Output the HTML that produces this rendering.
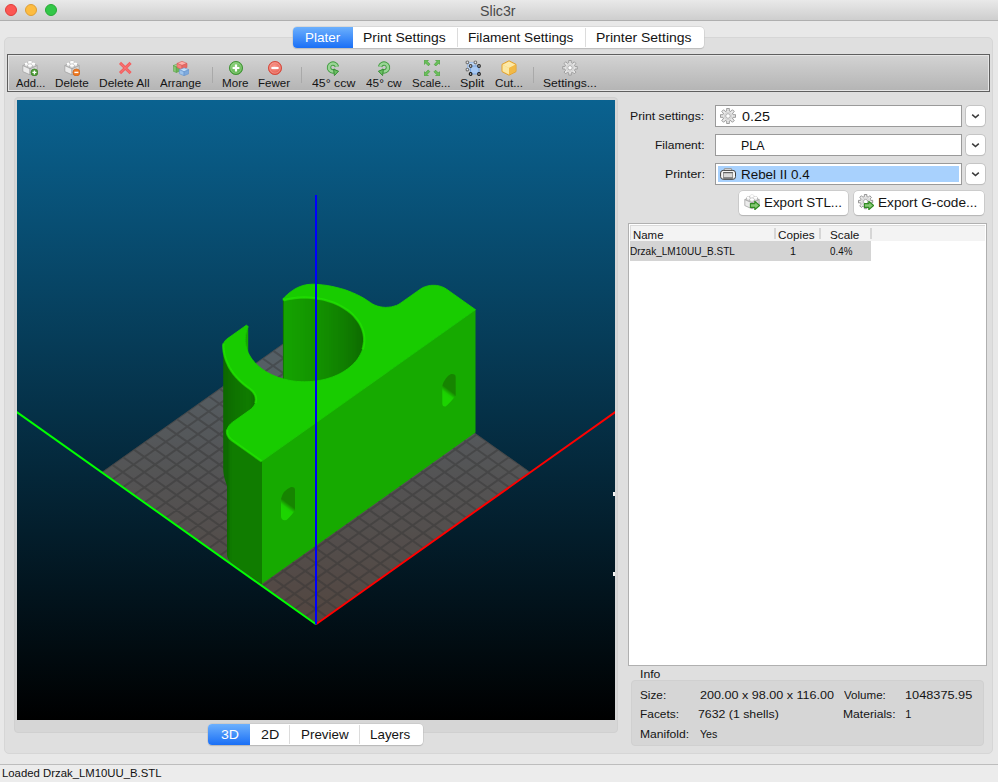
<!DOCTYPE html>
<html><head><meta charset="utf-8">
<style>
*{margin:0;padding:0;box-sizing:border-box}
html,body{width:998px;height:782px;overflow:hidden;background:#e8e8e8;font-family:"Liberation Sans",sans-serif;color:#1a1a1a}
.a{position:absolute}
.t{position:absolute;white-space:nowrap;line-height:1;transform-origin:0 0}
#title{left:0;top:0;width:998px;height:21px;background:linear-gradient(#e9e9e9,#cecece);border-bottom:1px solid #afafaf}
.dot{position:absolute;top:4px;width:12px;height:12px;border-radius:50%}
#panel{left:4px;top:37px;width:989px;height:717px;background:#dfdfdf;border:1px solid #d6d6d6;border-radius:5px}
#tabs{left:293px;top:27px;width:411px;height:21px;background:#fff;border-radius:4px;box-shadow:0 0 0 0.5px #c8c8c8,0 1px 1px rgba(0,0,0,.2)}
#toolbar{left:7px;top:54px;width:983px;height:38px;border:1px solid #5f5f5f;background:linear-gradient(#d3d3d3,#b4b4b4);box-shadow:inset 0 0 0 1px #e6e6e6}
#vgroup{left:14px;top:97px;width:604px;height:636px;background:#d6d6d6;border-radius:4px;border:1px solid #d0d0d0}
#view{left:17px;top:100px;width:598px;height:620px}
#status{left:0;top:764px;width:998px;height:18px;background:#ececec;border-top:1px solid #bdbdbd}
.combo{position:absolute;left:715px;width:247px;height:22px;background:#fff;border:1px solid #9a9a9a}
.dd{position:absolute;left:966px;width:19px;height:20px;background:#fff;border-radius:4px;box-shadow:0 0 0 0.8px #bdbdbd,0 1px 1px rgba(0,0,0,.15)}
.btn{position:absolute;height:24px;background:#fff;border-radius:4px;box-shadow:0 0 0 0.5px #b9b9b9,0 1px 1px rgba(0,0,0,.2)}
#list{left:628px;top:223px;width:359px;height:443px;background:#fff;border:1px solid #b0b0b0}
#info{left:631px;top:680px;width:353px;height:66px;background:#d6d6d6;border-radius:4px;border:1px solid #d0d0d0}
#btabs{left:208px;top:724px;width:215px;height:21px;background:#fff;border-radius:4px;box-shadow:0 0 0 0.5px #c0c0c0,0 1px 1px rgba(0,0,0,.2)}
</style></head><body>
<div id="title" class="a"></div>
<div class="dot" style="left:5px;background:#fc5753;border:0.5px solid #df3d39"></div>
<div class="dot" style="left:25px;background:#fdbc40;border:0.5px solid #de9f34"></div>
<div class="dot" style="left:45px;background:#33c748;border:0.5px solid #27aa35"></div>

<div id="panel" class="a"></div>
<div id="tabs" class="a"></div>
<div class="a" style="left:293px;top:27px;width:60px;height:21px;border-radius:4px 0 0 4px;background:linear-gradient(#6cb0fd,#1a6ff6)"></div>
<div class="a" style="left:457px;top:28px;width:1px;height:19px;background:#dcdcdc"></div>
<div class="a" style="left:585px;top:28px;width:1px;height:19px;background:#dcdcdc"></div>

<div id="toolbar" class="a"></div>

<div id="vgroup" class="a"></div>
<svg class="a" style="left:17px;top:100px" width="598" height="620" viewBox="17 100 598 620">
<defs><linearGradient id="bg" x1="0" y1="0" x2="0" y2="1"><stop offset="0" stop-color="rgb(10,98,144)"/><stop offset="1" stop-color="#000"/></linearGradient><clipPath id="bc"><polygon points="316.0,624.2 530.5,472.2 316.0,320.2 101.5,472.2"/></clipPath></defs>
<rect x="17" y="100" width="598" height="620" fill="url(#bg)"/>
<polygon points="316.0,624.2 530.5,472.2 316.0,320.2 101.5,472.2" fill="rgba(204,153,127,0.4)"/>
<path clip-path="url(#bc)" d="M316.0 624.2L101.5 472.2M316.0 624.2L530.5 472.2M326.7 616.6L112.2 464.6M305.3 616.6L519.8 464.6M337.4 609.0L122.9 457.0M294.6 609.0L509.1 457.0M348.2 601.4L133.7 449.4M283.8 601.4L498.3 449.4M358.9 593.8L144.4 441.8M273.1 593.8L487.6 441.8M369.6 586.2L155.1 434.2M262.4 586.2L476.9 434.2M380.4 578.6L165.8 426.6M251.7 578.6L466.1 426.6M391.1 571.0L176.6 419.0M240.9 571.0L455.4 419.0M401.8 563.4L187.3 411.4M230.2 563.4L444.7 411.4M412.5 555.8L198.0 403.8M219.5 555.8L434.0 403.8M423.2 548.2L208.8 396.2M208.8 548.2L423.2 396.2M434.0 540.6L219.5 388.6M198.0 540.6L412.5 388.6M444.7 533.0L230.2 381.0M187.3 533.0L401.8 381.0M455.4 525.4L240.9 373.4M176.6 525.4L391.1 373.4M466.1 517.8L251.7 365.8M165.8 517.8L380.4 365.8M476.9 510.2L262.4 358.2M155.1 510.2L369.6 358.2M487.6 502.6L273.1 350.6M144.4 502.6L358.9 350.6M498.3 495.0L283.8 343.0M133.7 495.0L348.2 343.0M509.1 487.4L294.6 335.4M122.9 487.4L337.4 335.4M519.8 479.8L305.3 327.8M112.2 479.8L326.7 327.8M530.5 472.2L316.0 320.2M101.5 472.2L316.0 320.2" stroke="rgba(51,51,51,0.4)" stroke-width="2" fill="none"/>
<path d="M316.0 624.2L646.0 390.3" stroke="#f00" stroke-width="2" fill="none"/>
<path d="M316.0 624.2L-14.0 390.3" stroke="#0f0" stroke-width="2" fill="none"/>
<defs><linearGradient id="w0" gradientUnits="userSpaceOnUse" x1="282.86" y1="0" x2="364.19" y2="0"><stop offset="0.0000" stop-color="rgb(16,124,0)"/><stop offset="0.0196" stop-color="rgb(16,124,0)"/><stop offset="0.0196" stop-color="rgb(21,162,0)"/><stop offset="0.0507" stop-color="rgb(21,162,0)"/><stop offset="0.0507" stop-color="rgb(20,161,0)"/><stop offset="0.0821" stop-color="rgb(20,161,0)"/><stop offset="0.0821" stop-color="rgb(20,160,0)"/><stop offset="0.1140" stop-color="rgb(20,160,0)"/><stop offset="0.1140" stop-color="rgb(20,158,0)"/><stop offset="0.1461" stop-color="rgb(20,158,0)"/><stop offset="0.1461" stop-color="rgb(20,157,0)"/><stop offset="0.1785" stop-color="rgb(20,157,0)"/><stop offset="0.1785" stop-color="rgb(20,156,0)"/><stop offset="0.2111" stop-color="rgb(20,156,0)"/><stop offset="0.2111" stop-color="rgb(20,154,0)"/><stop offset="0.2438" stop-color="rgb(20,154,0)"/><stop offset="0.2438" stop-color="rgb(19,153,0)"/><stop offset="0.2766" stop-color="rgb(19,153,0)"/><stop offset="0.2766" stop-color="rgb(19,151,0)"/><stop offset="0.3093" stop-color="rgb(19,151,0)"/><stop offset="0.3093" stop-color="rgb(19,150,0)"/><stop offset="0.3420" stop-color="rgb(19,150,0)"/><stop offset="0.3420" stop-color="rgb(19,148,0)"/><stop offset="0.3745" stop-color="rgb(19,148,0)"/><stop offset="0.3745" stop-color="rgb(19,147,0)"/><stop offset="0.4068" stop-color="rgb(19,147,0)"/><stop offset="0.4068" stop-color="rgb(18,145,0)"/><stop offset="0.4388" stop-color="rgb(18,145,0)"/><stop offset="0.4388" stop-color="rgb(18,144,0)"/><stop offset="0.4705" stop-color="rgb(18,144,0)"/><stop offset="0.4705" stop-color="rgb(18,142,0)"/><stop offset="0.5018" stop-color="rgb(18,142,0)"/><stop offset="0.5018" stop-color="rgb(18,140,0)"/><stop offset="0.5326" stop-color="rgb(18,140,0)"/><stop offset="0.5326" stop-color="rgb(18,139,0)"/><stop offset="0.5629" stop-color="rgb(18,139,0)"/><stop offset="0.5629" stop-color="rgb(17,137,0)"/><stop offset="0.5925" stop-color="rgb(17,137,0)"/><stop offset="0.5925" stop-color="rgb(17,135,0)"/><stop offset="0.6216" stop-color="rgb(17,135,0)"/><stop offset="0.6216" stop-color="rgb(17,133,0)"/><stop offset="0.6499" stop-color="rgb(17,133,0)"/><stop offset="0.6499" stop-color="rgb(17,132,0)"/><stop offset="0.6775" stop-color="rgb(17,132,0)"/><stop offset="0.6775" stop-color="rgb(16,130,0)"/><stop offset="0.7042" stop-color="rgb(16,130,0)"/><stop offset="0.7042" stop-color="rgb(16,128,0)"/><stop offset="0.7301" stop-color="rgb(16,128,0)"/><stop offset="0.7301" stop-color="rgb(16,127,0)"/><stop offset="0.7551" stop-color="rgb(16,127,0)"/><stop offset="0.7551" stop-color="rgb(16,125,0)"/><stop offset="0.7790" stop-color="rgb(16,125,0)"/><stop offset="0.7790" stop-color="rgb(16,123,0)"/><stop offset="0.8020" stop-color="rgb(16,123,0)"/><stop offset="0.8020" stop-color="rgb(15,121,0)"/><stop offset="0.8239" stop-color="rgb(15,121,0)"/><stop offset="0.8239" stop-color="rgb(15,120,0)"/><stop offset="0.8446" stop-color="rgb(15,120,0)"/><stop offset="0.8446" stop-color="rgb(15,118,0)"/><stop offset="0.8642" stop-color="rgb(15,118,0)"/><stop offset="0.8642" stop-color="rgb(15,117,0)"/><stop offset="0.8826" stop-color="rgb(15,117,0)"/><stop offset="0.8826" stop-color="rgb(15,115,0)"/><stop offset="0.8998" stop-color="rgb(15,115,0)"/><stop offset="0.8998" stop-color="rgb(14,114,0)"/><stop offset="0.9157" stop-color="rgb(14,114,0)"/><stop offset="0.9157" stop-color="rgb(14,112,0)"/><stop offset="0.9304" stop-color="rgb(14,112,0)"/><stop offset="0.9304" stop-color="rgb(14,111,0)"/><stop offset="0.9436" stop-color="rgb(14,111,0)"/><stop offset="0.9436" stop-color="rgb(14,109,0)"/><stop offset="0.9556" stop-color="rgb(14,109,0)"/><stop offset="0.9556" stop-color="rgb(14,108,0)"/><stop offset="0.9661" stop-color="rgb(14,108,0)"/><stop offset="0.9661" stop-color="rgb(13,107,0)"/><stop offset="0.9753" stop-color="rgb(13,107,0)"/><stop offset="0.9753" stop-color="rgb(13,105,0)"/><stop offset="0.9830" stop-color="rgb(13,105,0)"/><stop offset="0.9830" stop-color="rgb(13,104,0)"/><stop offset="0.9893" stop-color="rgb(13,104,0)"/><stop offset="0.9893" stop-color="rgb(13,103,0)"/><stop offset="0.9942" stop-color="rgb(13,103,0)"/><stop offset="0.9942" stop-color="rgb(13,102,0)"/><stop offset="0.9976" stop-color="rgb(13,102,0)"/><stop offset="0.9976" stop-color="rgb(13,101,0)"/><stop offset="0.9995" stop-color="rgb(13,101,0)"/><stop offset="0.9995" stop-color="rgb(13,100,0)"/><stop offset="1.0000" stop-color="rgb(13,100,0)"/></linearGradient></defs><polygon points="282.9,298.9 284.5,300.0 287.0,299.4 289.5,298.9 292.1,298.5 294.7,298.1 297.4,297.8 300.0,297.6 302.7,297.5 305.4,297.5 308.0,297.6 310.7,297.7 313.3,298.0 315.9,298.3 318.5,298.7 321.1,299.1 323.7,299.7 326.2,300.3 328.6,301.1 331.1,301.9 333.4,302.7 335.7,303.7 338.0,304.7 340.1,305.8 342.2,307.0 344.3,308.2 346.2,309.5 348.1,310.8 349.9,312.2 351.6,313.7 353.2,315.2 354.6,316.7 356.0,318.4 357.3,320.0 358.5,321.7 359.6,323.4 360.6,325.2 361.4,327.0 362.2,328.8 362.8,330.6 363.3,332.5 363.7,334.3 364.0,336.2 364.2,338.1 364.2,340.0 364.2,462.9 364.2,461.0 364.0,459.1 363.7,457.2 363.3,455.4 362.8,453.5 362.2,451.7 361.4,449.9 360.6,448.1 359.6,446.3 358.5,444.6 357.3,442.9 356.0,441.3 354.6,439.7 353.2,438.1 351.6,436.6 349.9,435.1 348.1,433.7 346.2,432.4 344.3,431.1 342.2,429.9 340.1,428.7 338.0,427.6 335.7,426.6 333.4,425.6 331.1,424.8 328.6,424.0 326.2,423.2 323.7,422.6 321.1,422.0 318.5,421.6 315.9,421.2 313.3,420.9 310.7,420.6 308.0,420.5 305.4,420.4 302.7,420.4 300.0,420.5 297.4,420.7 294.7,421.0 292.1,421.4 289.5,421.8 287.0,422.3 284.5,422.9 282.9,421.8" fill="url(#w0)"/>
<defs><linearGradient id="w1" gradientUnits="userSpaceOnUse" x1="245.28" y1="0" x2="248.24" y2="0"><stop offset="0.0000" stop-color="rgb(21,165,0)"/><stop offset="0.0231" stop-color="rgb(21,165,0)"/><stop offset="0.0231" stop-color="rgb(21,166,0)"/><stop offset="0.0864" stop-color="rgb(21,166,0)"/><stop offset="0.0864" stop-color="rgb(21,167,0)"/><stop offset="0.1899" stop-color="rgb(21,167,0)"/><stop offset="0.1899" stop-color="rgb(21,167,0)"/><stop offset="0.3333" stop-color="rgb(21,167,0)"/><stop offset="0.3333" stop-color="rgb(21,168,0)"/><stop offset="0.5164" stop-color="rgb(21,168,0)"/><stop offset="0.5164" stop-color="rgb(21,169,0)"/><stop offset="0.7388" stop-color="rgb(21,169,0)"/><stop offset="0.7388" stop-color="rgb(22,169,0)"/><stop offset="1.0000" stop-color="rgb(22,169,0)"/></linearGradient></defs><polygon points="245.3,339.5 245.4,337.6 245.5,335.7 245.8,333.9 246.3,332.0 246.8,330.2 247.5,328.3 248.2,326.5 248.2,449.4 247.5,451.2 246.8,453.1 246.3,454.9 245.8,456.8 245.5,458.6 245.4,460.5 245.3,462.4" fill="url(#w1)"/>
<defs><linearGradient id="w2" gradientUnits="userSpaceOnUse" x1="223.23" y1="0" x2="255.95" y2="0"><stop offset="0.0000" stop-color="rgb(13,100,0)"/><stop offset="0.0056" stop-color="rgb(13,100,0)"/><stop offset="0.0056" stop-color="rgb(13,102,0)"/><stop offset="0.0185" stop-color="rgb(13,102,0)"/><stop offset="0.0185" stop-color="rgb(13,103,0)"/><stop offset="0.0385" stop-color="rgb(13,103,0)"/><stop offset="0.0385" stop-color="rgb(13,104,0)"/><stop offset="0.0657" stop-color="rgb(13,104,0)"/><stop offset="0.0657" stop-color="rgb(13,106,0)"/><stop offset="0.1000" stop-color="rgb(13,106,0)"/><stop offset="0.1000" stop-color="rgb(13,107,0)"/><stop offset="0.1412" stop-color="rgb(13,107,0)"/><stop offset="0.1412" stop-color="rgb(14,109,0)"/><stop offset="0.1893" stop-color="rgb(14,109,0)"/><stop offset="0.1893" stop-color="rgb(14,110,0)"/><stop offset="0.2442" stop-color="rgb(14,110,0)"/><stop offset="0.2442" stop-color="rgb(14,112,0)"/><stop offset="0.3056" stop-color="rgb(14,112,0)"/><stop offset="0.3056" stop-color="rgb(14,114,0)"/><stop offset="0.3734" stop-color="rgb(14,114,0)"/><stop offset="0.3734" stop-color="rgb(15,116,0)"/><stop offset="0.4474" stop-color="rgb(15,116,0)"/><stop offset="0.4474" stop-color="rgb(15,117,0)"/><stop offset="0.5275" stop-color="rgb(15,117,0)"/><stop offset="0.5275" stop-color="rgb(15,119,0)"/><stop offset="0.6133" stop-color="rgb(15,119,0)"/><stop offset="0.6133" stop-color="rgb(15,121,0)"/><stop offset="0.7047" stop-color="rgb(15,121,0)"/><stop offset="0.7047" stop-color="rgb(16,123,0)"/><stop offset="0.8014" stop-color="rgb(16,123,0)"/><stop offset="0.8014" stop-color="rgb(15,122,0)"/><stop offset="0.8592" stop-color="rgb(15,122,0)"/><stop offset="0.8592" stop-color="rgb(15,117,0)"/><stop offset="0.9080" stop-color="rgb(15,117,0)"/><stop offset="0.9080" stop-color="rgb(14,112,0)"/><stop offset="0.9471" stop-color="rgb(14,112,0)"/><stop offset="0.9471" stop-color="rgb(14,108,0)"/><stop offset="0.9758" stop-color="rgb(14,108,0)"/><stop offset="0.9758" stop-color="rgb(13,104,0)"/><stop offset="0.9935" stop-color="rgb(13,104,0)"/><stop offset="0.9935" stop-color="rgb(13,101,0)"/><stop offset="1.0000" stop-color="rgb(13,101,0)"/></linearGradient></defs><polygon points="223.2,345.8 223.4,349.0 223.8,352.1 224.5,355.3 225.4,358.4 226.5,361.5 227.9,364.6 229.4,367.6 231.2,370.5 233.2,373.4 235.4,376.1 237.9,378.8 240.5,381.4 243.3,383.9 246.3,386.3 249.5,388.6 251.3,390.1 252.9,391.7 254.2,393.5 255.2,395.4 255.7,397.3 256.0,399.3 256.0,522.2 255.7,520.2 255.2,518.3 254.2,516.4 252.9,514.6 251.3,513.0 249.5,511.5 246.3,509.2 243.3,506.8 240.5,504.3 237.9,501.7 235.4,499.0 233.2,496.3 231.2,493.4 229.4,490.5 227.9,487.5 226.5,484.4 225.4,481.3 224.5,478.2 223.8,475.0 223.4,471.9 223.2,468.7" fill="url(#w2)"/>
<defs><linearGradient id="w3" gradientUnits="userSpaceOnUse" x1="227.01" y1="0" x2="475.48" y2="0"><stop offset="0.0000" stop-color="rgb(13,101,0)"/><stop offset="0.0009" stop-color="rgb(13,101,0)"/><stop offset="0.0009" stop-color="rgb(13,105,0)"/><stop offset="0.0036" stop-color="rgb(13,105,0)"/><stop offset="0.0036" stop-color="rgb(14,110,0)"/><stop offset="0.0080" stop-color="rgb(14,110,0)"/><stop offset="0.0080" stop-color="rgb(15,115,0)"/><stop offset="0.0140" stop-color="rgb(15,115,0)"/><stop offset="0.0140" stop-color="rgb(15,121,0)"/><stop offset="0.0215" stop-color="rgb(15,121,0)"/><stop offset="0.0215" stop-color="rgb(16,124,0)"/><stop offset="0.1389" stop-color="rgb(16,124,0)"/><stop offset="0.1389" stop-color="rgb(22,170,0)"/><stop offset="1.0000" stop-color="rgb(22,170,0)"/></linearGradient></defs><polygon points="227.0,431.5 227.2,433.5 227.9,435.5 229.0,437.4 230.5,439.1 232.3,440.6 261.5,461.3 475.5,309.7 475.5,432.6 261.5,584.2 232.3,563.6 230.5,562.0 229.0,560.3 227.9,558.4 227.2,556.4 227.0,554.4" fill="url(#w3)"/>
<polygon points="261.5,461.3 475.5,309.7 446.3,289.0 444.1,287.7 441.7,286.7 439.1,285.9 436.3,285.4 433.4,285.3 430.6,285.4 427.8,285.9 425.2,286.7 422.7,287.7 420.6,289.0 400.9,302.9 398.8,304.3 396.5,305.4 393.9,306.2 391.3,306.9 388.5,307.2 385.7,307.4 382.9,307.2 380.2,306.8 377.5,306.1 375.0,305.2 372.7,304.1 370.6,302.7 367.3,300.5 363.9,298.3 360.3,296.3 356.5,294.4 352.6,292.7 348.6,291.1 344.5,289.6 340.3,288.4 335.9,287.3 331.5,286.3 327.1,285.5 322.6,284.9 318.0,284.5 313.4,284.2 310.7,284.3 308.0,284.5 305.4,284.9 302.8,285.6 300.2,286.5 297.6,287.6 295.1,288.9 292.6,290.5 290.1,292.3 287.7,294.3 285.2,296.5 282.9,298.9 284.5,300.0 287.0,299.4 289.5,298.9 292.1,298.5 294.7,298.1 297.4,297.8 300.0,297.6 302.7,297.5 305.4,297.5 308.0,297.6 310.7,297.7 313.3,298.0 315.9,298.3 318.5,298.7 321.1,299.1 323.7,299.7 326.2,300.3 328.6,301.1 331.1,301.9 333.4,302.7 335.7,303.7 338.0,304.7 340.1,305.8 342.2,307.0 344.3,308.2 346.2,309.5 348.1,310.8 349.9,312.2 351.6,313.7 353.2,315.2 354.6,316.7 356.0,318.4 357.3,320.0 358.5,321.7 359.6,323.4 360.6,325.2 361.4,327.0 362.2,328.8 362.8,330.6 363.3,332.5 363.7,334.3 364.0,336.2 364.2,338.1 364.2,340.0 364.1,341.9 363.9,343.8 363.6,345.6 363.2,347.5 362.6,349.3 361.9,351.2 361.1,353.0 360.2,354.7 359.2,356.5 358.1,358.2 356.9,359.9 355.6,361.5 354.1,363.1 352.6,364.7 351.0,366.1 349.2,367.6 347.4,369.0 345.5,370.3 343.6,371.6 341.5,372.8 339.4,373.9 337.2,375.0 334.9,376.0 332.6,376.9 330.2,377.7 327.8,378.5 325.3,379.2 322.8,379.8 320.2,380.3 317.6,380.8 315.0,381.1 312.4,381.4 309.7,381.6 307.1,381.7 304.4,381.8 301.7,381.7 299.1,381.6 296.4,381.4 293.8,381.1 291.2,380.7 288.6,380.2 286.1,379.6 283.6,379.0 281.1,378.3 278.7,377.5 276.3,376.6 274.0,375.7 271.8,374.7 269.6,373.6 267.5,372.5 265.4,371.2 263.5,370.0 261.6,368.6 259.8,367.2 258.1,365.8 256.5,364.3 255.0,362.7 253.6,361.1 252.3,359.5 251.1,357.8 250.0,356.1 249.0,354.3 248.1,352.5 247.4,350.7 246.7,348.9 246.2,347.0 245.8,345.2 245.5,343.3 245.3,341.4 245.3,339.5 245.4,337.6 245.5,335.7 245.8,333.9 246.3,332.0 246.8,330.2 247.5,328.3 248.2,326.5 246.4,325.2 227.2,338.8 226.5,339.4 225.8,340.0 225.2,340.6 224.7,341.3 224.2,342.0 223.9,342.7 223.6,343.5 223.4,344.2 223.3,345.0 223.2,345.8 223.4,349.0 223.8,352.1 224.5,355.3 225.4,358.4 226.5,361.5 227.9,364.6 229.4,367.6 231.2,370.5 233.2,373.4 235.4,376.1 237.9,378.8 240.5,381.4 243.3,383.9 246.3,386.3 249.5,388.6 251.3,390.1 252.9,391.7 254.2,393.5 255.2,395.4 255.7,397.3 256.0,399.3 255.8,401.3 255.3,403.3 254.4,405.1 253.1,406.9 251.6,408.6 249.7,410.1 232.3,422.4 230.5,423.9 229.0,425.7 227.9,427.5 227.2,429.5 227.0,431.5 227.2,433.5 227.9,435.5 229.0,437.4 230.5,439.1 232.3,440.6" fill="rgb(24,204,0)" stroke="rgb(24,204,0)" stroke-width="0.9" stroke-linejoin="round"/>
<path d="M282.9 298.9L284.5 300.0L287.0 299.4L289.5 298.9L292.1 298.5L294.7 298.1L297.4 297.8L300.0 297.6L302.7 297.5L305.4 297.5L308.0 297.6L310.7 297.7L313.3 298.0L315.9 298.3L318.5 298.7L321.1 299.1L323.7 299.7L326.2 300.3L328.6 301.1L331.1 301.9L333.4 302.7L335.7 303.7L338.0 304.7L340.1 305.8L342.2 307.0L344.3 308.2L346.2 309.5L348.1 310.8L349.9 312.2L351.6 313.7L353.2 315.2L354.6 316.7L356.0 318.4L357.3 320.0L358.5 321.7L359.6 323.4L360.6 325.2L361.4 327.0L362.2 328.8L362.8 330.6L363.3 332.5L363.7 334.3L364.0 336.2L364.2 338.1L364.2 340.0L364.1 341.9L363.9 343.8L363.6 345.6L363.2 347.5L362.6 349.3" fill="none" stroke="rgb(36,234,0)" stroke-width="2.4" stroke-linejoin="round" opacity="0.6"/>
<path d="M223.6 343.5L223.4 344.2L223.3 345.0L223.2 345.8L223.4 349.0L223.8 352.1L224.5 355.3L225.4 358.4L226.5 361.5L227.9 364.6L229.4 367.6L231.2 370.5L233.2 373.4L235.4 376.1L237.9 378.8L240.5 381.4L243.3 383.9L246.3 386.3L249.5 388.6L251.3 390.1L252.9 391.7L254.2 393.5L255.2 395.4L255.7 397.3L256.0 399.3L255.8 401.3L255.3 403.3" fill="none" stroke="rgb(36,234,0)" stroke-width="2.4" stroke-linejoin="round" opacity="0.6"/>
<path d="M227.2 429.5L227.0 431.5L227.2 433.5L227.9 435.5L229.0 437.4L230.5 439.1L232.3 440.6L261.5 461.3" fill="none" stroke="rgb(36,234,0)" stroke-width="2.4" stroke-linejoin="round" opacity="0.6"/>
<defs><linearGradient id="h1" gradientUnits="userSpaceOnUse" x1="290.6" y1="501.6" x2="284.6" y2="509.6"><stop offset="0" stop-color="rgb(22,132,0)"/><stop offset="0.3" stop-color="rgb(22,132,0)"/><stop offset="0.75" stop-color="rgb(27,206,0)"/><stop offset="1" stop-color="rgb(28,212,0)"/></linearGradient><linearGradient id="h2" gradientUnits="userSpaceOnUse" x1="451.4" y1="387.8" x2="445.4" y2="395.8"><stop offset="0" stop-color="rgb(22,132,0)"/><stop offset="0.3" stop-color="rgb(22,132,0)"/><stop offset="0.75" stop-color="rgb(27,206,0)"/><stop offset="1" stop-color="rgb(28,212,0)"/></linearGradient></defs>
<path d="M281 499Q283 490 291 487Q295 486.5 295 490L295 510.5Q290 517 286.5 520Q281 521 281 516Z" fill="url(#h1)"/>
<path d="M442.3 385.5Q445 377 451 374Q455.7 373.5 455.7 377L455.7 395.5Q450 403 445.5 406.5Q442.3 407 442.3 403Z" fill="url(#h2)"/>
<path d="M316.0 624.2L316.0 195" stroke="#00f" stroke-width="2" fill="none"/>
</svg>
<div class="a" style="left:613px;top:492px;width:2px;height:4px;background:#f4f4f4"></div>
<div class="a" style="left:613px;top:572px;width:2px;height:4px;background:#f4f4f4"></div>

<div class="combo" style="top:105px"></div>
<div class="combo" style="top:134px"></div>
<div class="combo" style="top:163px"></div>
<div class="a" style="left:718px;top:166px;width:241px;height:16px;background:#a8d1fd"></div>
<div class="dd" style="top:106px"></div>
<div class="dd" style="top:135px"></div>
<div class="dd" style="top:164px"></div>

<div class="btn" style="left:739px;top:191px;width:109px"></div>
<div class="btn" style="left:854px;top:191px;width:130px"></div>

<div id="list" class="a"></div>
<div class="a" style="left:630px;top:225px;width:355px;height:1px;background:#dadada"></div>
<div class="a" style="left:630px;top:226px;width:355px;height:15px;background:#f3f3f3"></div>
<div class="a" style="left:630px;top:226px;width:1px;height:14px;background:#dcdcdc"></div>
<div class="a" style="left:774px;top:228px;width:2px;height:11px;background:#d6d6d6"></div>
<div class="a" style="left:819px;top:228px;width:2px;height:11px;background:#d6d6d6"></div>
<div class="a" style="left:870px;top:228px;width:2px;height:11px;background:#d6d6d6"></div>
<div class="a" style="left:630px;top:241px;width:241px;height:20px;background:#d4d4d4"></div>
<div id="info" class="a"></div>

<div id="btabs" class="a"></div>
<div class="a" style="left:289px;top:725px;width:1px;height:19px;background:#dcdcdc"></div>
<div class="a" style="left:359px;top:725px;width:1px;height:19px;background:#dcdcdc"></div>
<div class="a" style="left:208px;top:724px;width:42px;height:21px;border-radius:4px 0 0 4px;background:linear-gradient(#6cb0fd,#1a6ff6)"></div>

<div id="status" class="a"></div>
<svg class="a" style="left:22px;top:60px" width="16" height="16" viewBox="0 0 16 16"><polygon points="0.8,5.6 8,2.4 15.2,5.6 8,8.8" fill="#f7f7f7" stroke="#a3a3a3" stroke-width="0.8"/><polygon points="0.8,5.6 8,8.8 8,14.8 0.8,11.6" fill="#ececec" stroke="#a3a3a3" stroke-width="0.8"/><polygon points="8,8.8 15.2,5.6 15.2,11.6 8,14.8" fill="#d8d8d8" stroke="#a3a3a3" stroke-width="0.8"/><path d="M2.4999999999999996 5.4v-1.8a2.1 1.0 0 0 1 4.2 0v1.8a2.1 1.0 0 0 1 -4.2 0z" fill="#f0f0f0" stroke="#9b9b9b" stroke-width="0.6"/><ellipse cx="4.6" cy="3.6000000000000005" rx="2.1" ry="1.0" fill="#fff"/><path d="M5.9 3.9v-1.8a2.1 1.0 0 0 1 4.2 0v1.8a2.1 1.0 0 0 1 -4.2 0z" fill="#f0f0f0" stroke="#9b9b9b" stroke-width="0.6"/><ellipse cx="8" cy="2.0999999999999996" rx="2.1" ry="1.0" fill="#fff"/><path d="M9.3 5.4v-1.8a2.1 1.0 0 0 1 4.2 0v1.8a2.1 1.0 0 0 1 -4.2 0z" fill="#f0f0f0" stroke="#9b9b9b" stroke-width="0.6"/><ellipse cx="11.4" cy="3.6000000000000005" rx="2.1" ry="1.0" fill="#fff"/><path d="M5.9 7.0v-1.8a2.1 1.0 0 0 1 4.2 0v1.8a2.1 1.0 0 0 1 -4.2 0z" fill="#f0f0f0" stroke="#9b9b9b" stroke-width="0.6"/><ellipse cx="8" cy="5.2" rx="2.1" ry="1.0" fill="#fff"/><circle cx="12.4" cy="12.4" r="3.5" fill="#4b9b34" stroke="#377a25" stroke-width="0.6"/><path d="M12.4 10.4v4M10.4 12.4h4" stroke="#fff" stroke-width="1.4"/></svg>
<svg class="a" style="left:64px;top:60px" width="16" height="16" viewBox="0 0 16 16"><polygon points="0.8,5.6 8,2.4 15.2,5.6 8,8.8" fill="#f7f7f7" stroke="#a3a3a3" stroke-width="0.8"/><polygon points="0.8,5.6 8,8.8 8,14.8 0.8,11.6" fill="#ececec" stroke="#a3a3a3" stroke-width="0.8"/><polygon points="8,8.8 15.2,5.6 15.2,11.6 8,14.8" fill="#d8d8d8" stroke="#a3a3a3" stroke-width="0.8"/><path d="M2.4999999999999996 5.4v-1.8a2.1 1.0 0 0 1 4.2 0v1.8a2.1 1.0 0 0 1 -4.2 0z" fill="#f0f0f0" stroke="#9b9b9b" stroke-width="0.6"/><ellipse cx="4.6" cy="3.6000000000000005" rx="2.1" ry="1.0" fill="#fff"/><path d="M5.9 3.9v-1.8a2.1 1.0 0 0 1 4.2 0v1.8a2.1 1.0 0 0 1 -4.2 0z" fill="#f0f0f0" stroke="#9b9b9b" stroke-width="0.6"/><ellipse cx="8" cy="2.0999999999999996" rx="2.1" ry="1.0" fill="#fff"/><path d="M9.3 5.4v-1.8a2.1 1.0 0 0 1 4.2 0v1.8a2.1 1.0 0 0 1 -4.2 0z" fill="#f0f0f0" stroke="#9b9b9b" stroke-width="0.6"/><ellipse cx="11.4" cy="3.6000000000000005" rx="2.1" ry="1.0" fill="#fff"/><path d="M5.9 7.0v-1.8a2.1 1.0 0 0 1 4.2 0v1.8a2.1 1.0 0 0 1 -4.2 0z" fill="#f0f0f0" stroke="#9b9b9b" stroke-width="0.6"/><ellipse cx="8" cy="5.2" rx="2.1" ry="1.0" fill="#fff"/><circle cx="12.4" cy="12.4" r="3.5" fill="#ee7a22" stroke="#c65a12" stroke-width="0.6"/><path d="M10.4 12.4h4" stroke="#fff" stroke-width="1.4"/></svg>
<svg class="a" style="left:117px;top:60px" width="16" height="16" viewBox="0 0 16 16"><path d="M3 2.9L13.6 13.2M13.6 2.9L3 13.2" stroke="#f45f5f" stroke-width="3"/><path d="M3.6 3.5L13 12.6M13 3.5L3.6 12.6" stroke="#f78a8a" stroke-width="1" opacity="0.6"/></svg>
<svg class="a" style="left:173px;top:60px" width="16" height="16" viewBox="0 0 16 16"><polygon points="0.20,5.64 3.40,4.30 6.60,5.64 3.40,6.99" fill="#a6dc98" stroke="#5aa048" stroke-width="0.6"/><polygon points="0.20,5.64 3.40,6.99 3.40,12.50 0.20,11.16" fill="#86c874" stroke="#5aa048" stroke-width="0.6"/><polygon points="3.40,6.99 6.60,5.64 6.60,11.16 3.40,12.50" fill="#6cb45a" stroke="#5aa048" stroke-width="0.6"/><polygon points="4.00,3.40 9.00,1.30 14.00,3.40 9.00,5.50" fill="#fdb0ac" stroke="#d85a56" stroke-width="0.6"/><polygon points="4.00,3.40 9.00,5.50 9.00,9.50 4.00,7.40" fill="#f58580" stroke="#d85a56" stroke-width="0.6"/><polygon points="9.00,5.50 14.00,3.40 14.00,7.40 9.00,9.50" fill="#e86a66" stroke="#d85a56" stroke-width="0.6"/><polygon points="6.40,9.77 11.10,7.80 15.80,9.77 11.10,11.75" fill="#c2dcf6" stroke="#6494cc" stroke-width="0.6"/><polygon points="6.40,9.77 11.10,11.75 11.10,15.70 6.40,13.73" fill="#9cc3ec" stroke="#6494cc" stroke-width="0.6"/><polygon points="11.10,11.75 15.80,9.77 15.80,13.73 11.10,15.70" fill="#7eaade" stroke="#6494cc" stroke-width="0.6"/></svg>
<svg class="a" style="left:228px;top:60px" width="16" height="16" viewBox="0 0 16 16"><defs><radialGradient id="gm" cx="0.45" cy="0.4" r="0.6"><stop offset="0" stop-color="#9ddc8c"/><stop offset="1" stop-color="#4ea83f"/></radialGradient></defs><circle cx="8" cy="8" r="6.6" fill="url(#gm)" stroke="#3e9134" stroke-width="0.9"/><circle cx="8" cy="8" r="5.2" fill="none" stroke="#c8ecc0" stroke-width="0.5" opacity="0.7"/><path d="M8 4.6v6.8M4.6 8h6.8" stroke="#fff" stroke-width="2.1"/></svg>
<svg class="a" style="left:267px;top:60px" width="16" height="16" viewBox="0 0 16 16"><defs><radialGradient id="gf" cx="0.45" cy="0.4" r="0.6"><stop offset="0" stop-color="#fb9c90"/><stop offset="1" stop-color="#e2574a"/></radialGradient></defs><circle cx="8" cy="8" r="6.6" fill="url(#gf)" stroke="#d2493c" stroke-width="0.9"/><circle cx="8" cy="8" r="5.2" fill="none" stroke="#ffd0c8" stroke-width="0.5" opacity="0.7"/><path d="M4.4 8h7.2" stroke="#fff" stroke-width="2.2"/></svg>
<svg class="a" style="left:325px;top:60px" width="16" height="16" viewBox="0 0 16 16"><path d="M11.91 6.67A4 4 0 1 0 11.15 9.96" fill="none" stroke="#3e9a3c" stroke-width="4.4"/><path d="M11.91 6.67A4 4 0 1 0 11.15 9.96" fill="none" stroke="#9ad596" stroke-width="2.6"/><polygon points="9.4,15.6 13.6,11.2 8.6,9.4" fill="#6cbf64" stroke="#2f8a2c" stroke-width="0.9" stroke-linejoin="round"/></svg>
<svg class="a" style="left:376px;top:60px" width="16" height="16" viewBox="0 0 16 16"><g transform="translate(16 0) scale(-1 1)"><path d="M11.91 6.67A4 4 0 1 0 11.15 9.96" fill="none" stroke="#3e9a3c" stroke-width="4.4"/><path d="M11.91 6.67A4 4 0 1 0 11.15 9.96" fill="none" stroke="#9ad596" stroke-width="2.6"/><polygon points="9.4,15.6 13.6,11.2 8.6,9.4" fill="#6cbf64" stroke="#2f8a2c" stroke-width="0.9" stroke-linejoin="round"/></g></svg>
<svg class="a" style="left:424px;top:60px" width="16" height="16" viewBox="0 0 16 16"><g transform="translate(3.4 3.4) rotate(0)"><path d="M-3.2 -3.2h4.2l-1.2 1.2 2.8 2.8-1.6 1.6-2.8-2.8-1.4 1.4z" fill="#6cc05c" stroke="#46a03a" stroke-width="0.7"/></g><g transform="translate(12.6 3.4) rotate(90)"><path d="M-3.2 -3.2h4.2l-1.2 1.2 2.8 2.8-1.6 1.6-2.8-2.8-1.4 1.4z" fill="#6cc05c" stroke="#46a03a" stroke-width="0.7"/></g><g transform="translate(12.6 12.6) rotate(180)"><path d="M-3.2 -3.2h4.2l-1.2 1.2 2.8 2.8-1.6 1.6-2.8-2.8-1.4 1.4z" fill="#6cc05c" stroke="#46a03a" stroke-width="0.7"/></g><g transform="translate(3.4 12.6) rotate(270)"><path d="M-3.2 -3.2h4.2l-1.2 1.2 2.8 2.8-1.6 1.6-2.8-2.8-1.4 1.4z" fill="#6cc05c" stroke="#46a03a" stroke-width="0.7"/></g></svg>
<svg class="a" style="left:465px;top:60px" width="16" height="16" viewBox="0 0 16 16"><rect x="2.4" y="2.4" width="8" height="7.4" fill="#bcd6f6" stroke="#8fb3e6" stroke-width="0.6"/><rect x="5.6" y="6" width="8.4" height="8" fill="#a9c9f2" stroke="#6f9fe0" stroke-width="0.9"/><circle cx="2.4" cy="2.4" r="1.35" fill="#e8e8e8" stroke="#777" stroke-width="1.1"/><circle cx="10.4" cy="2.4" r="1.35" fill="#e8e8e8" stroke="#777" stroke-width="1.1"/><circle cx="2.4" cy="9.6" r="1.35" fill="#e8e8e8" stroke="#777" stroke-width="1.1"/><circle cx="5.6" cy="6" r="1.35" fill="#e8e8e8" stroke="#444" stroke-width="1.1"/><circle cx="14" cy="6" r="1.35" fill="#e8e8e8" stroke="#222" stroke-width="1.1"/><circle cx="5.6" cy="14" r="1.35" fill="#e8e8e8" stroke="#111" stroke-width="1.1"/><circle cx="14" cy="14" r="1.35" fill="#e8e8e8" stroke="#111" stroke-width="1.1"/></svg>
<svg class="a" style="left:501px;top:60px" width="16" height="16" viewBox="0 0 16 16"><polygon points="8,0.8 15,4.4 15,11.6 8,15.2 1,11.6 1,4.4" fill="#f6c453" stroke="#e3a02c" stroke-width="1"/><polygon points="1.6,4.8 8,1.6 14.4,4.8 8,8" fill="#fde9a8"/><polygon points="1.6,4.8 8,8 8,14.4 1.6,11.2" fill="#fbe7a2"/><polygon points="8,8 14.4,4.8 14.4,11.2 8,14.4" fill="#f2b945"/></svg>
<svg class="a" style="left:562px;top:60px" width="16" height="16" viewBox="0 0 16 16"><path d="M6.01 3.00L6.83 2.73L6.72 0.51L9.28 0.51L9.17 2.73L9.99 3.00L10.76 3.39L12.24 1.74L14.06 3.56L12.41 5.04L12.80 5.81L13.07 6.63L15.29 6.52L15.29 9.08L13.07 8.97L12.80 9.79L12.41 10.56L14.06 12.04L12.24 13.86L10.76 12.21L9.99 12.60L9.17 12.87L9.28 15.09L6.72 15.09L6.83 12.87L6.01 12.60L5.24 12.21L3.76 13.86L1.94 12.04L3.59 10.56L3.20 9.79L2.93 8.97L0.71 9.08L0.71 6.52L2.93 6.63L3.20 5.81L3.59 5.04L1.94 3.56L3.76 1.74L5.24 3.39Z" fill="#e6e6e6" stroke="#9a9a9a" stroke-width="0.9" stroke-linejoin="round"/><circle cx="8" cy="7.8" r="3.60" fill="none" stroke="#d4d4d4" stroke-width="1.2"/><circle cx="8" cy="7.8" r="2.2" fill="#fff" stroke="#9a9a9a" stroke-width="0.8"/></svg>
<div class="a" style="left:212px;top:67px;width:1px;height:16px;background:#a9a9a9"></div>
<div class="a" style="left:301px;top:67px;width:1px;height:16px;background:#a9a9a9"></div>
<div class="a" style="left:533px;top:67px;width:1px;height:16px;background:#a9a9a9"></div>
<svg class="a" style="left:720px;top:108px" width="16" height="16" viewBox="0 0 16 16"><path d="M5.97 3.10L6.81 2.84L6.66 0.42L9.34 0.42L9.19 2.84L10.03 3.10L10.81 3.51L12.42 1.69L14.31 3.58L12.49 5.19L12.90 5.97L13.16 6.81L15.58 6.66L15.58 9.34L13.16 9.19L12.90 10.03L12.49 10.81L14.31 12.42L12.42 14.31L10.81 12.49L10.03 12.90L9.19 13.16L9.34 15.58L6.66 15.58L6.81 13.16L5.97 12.90L5.19 12.49L3.58 14.31L1.69 12.42L3.51 10.81L3.10 10.03L2.84 9.19L0.42 9.34L0.42 6.66L2.84 6.81L3.10 5.97L3.51 5.19L1.69 3.58L3.58 1.69L5.19 3.51Z" fill="#ececec" stroke="#8c8c8c" stroke-width="0.9" stroke-linejoin="round"/><circle cx="8" cy="8" r="3.70" fill="none" stroke="#d4d4d4" stroke-width="1.2"/><circle cx="8" cy="8" r="2.3" fill="#fff" stroke="#9a9a9a" stroke-width="0.8"/></svg>
<svg class="a" style="left:720px;top:168px" width="16" height="12" viewBox="0 0 16 12"><rect x="4.2" y="0.5" width="7.4" height="3" rx="0.5" fill="#e4e4e4" stroke="#8f8f8f" stroke-width="0.8"/><rect x="0.6" y="2.4" width="14.9" height="8.9" rx="2.6" fill="#f6f6f6" stroke="#3f3f3f" stroke-width="1"/><rect x="3.4" y="4.4" width="9.3" height="6" fill="#d9d9d9" stroke="#777" stroke-width="0.7"/><rect x="3.6" y="4.2" width="9" height="1" fill="#555"/><rect x="3.6" y="9.3" width="9" height="1.2" fill="#6a6a6a"/></svg>
<svg class="a" style="left:744px;top:194px" width="16" height="16" viewBox="0 0 16 16"><polygon points="0.8,5.6 8,2.4 15.2,5.6 8,8.8" fill="#f7f7f7" stroke="#a3a3a3" stroke-width="0.8"/><polygon points="0.8,5.6 8,8.8 8,14.8 0.8,11.6" fill="#ececec" stroke="#a3a3a3" stroke-width="0.8"/><polygon points="8,8.8 15.2,5.6 15.2,11.6 8,14.8" fill="#d8d8d8" stroke="#a3a3a3" stroke-width="0.8"/><path d="M2.4999999999999996 5.4v-1.8a2.1 1.0 0 0 1 4.2 0v1.8a2.1 1.0 0 0 1 -4.2 0z" fill="#f0f0f0" stroke="#9b9b9b" stroke-width="0.6"/><ellipse cx="4.6" cy="3.6000000000000005" rx="2.1" ry="1.0" fill="#fff"/><path d="M5.9 3.9v-1.8a2.1 1.0 0 0 1 4.2 0v1.8a2.1 1.0 0 0 1 -4.2 0z" fill="#f0f0f0" stroke="#9b9b9b" stroke-width="0.6"/><ellipse cx="8" cy="2.0999999999999996" rx="2.1" ry="1.0" fill="#fff"/><path d="M9.3 5.4v-1.8a2.1 1.0 0 0 1 4.2 0v1.8a2.1 1.0 0 0 1 -4.2 0z" fill="#f0f0f0" stroke="#9b9b9b" stroke-width="0.6"/><ellipse cx="11.4" cy="3.6000000000000005" rx="2.1" ry="1.0" fill="#fff"/><path d="M5.9 7.0v-1.8a2.1 1.0 0 0 1 4.2 0v1.8a2.1 1.0 0 0 1 -4.2 0z" fill="#f0f0f0" stroke="#9b9b9b" stroke-width="0.6"/><ellipse cx="8" cy="5.2" rx="2.1" ry="1.0" fill="#fff"/><path d="M6.4 9.6h4.4v-2.3l4.8 4.2-4.8 4.2v-2.3h-4.4z" fill="#86c874" stroke="#2f8a22" stroke-width="1.1" stroke-linejoin="round"/></svg>
<svg class="a" style="left:858px;top:194px" width="16" height="16" viewBox="0 0 16 16"><path d="M5.61 2.80L6.43 2.53L6.35 0.51L8.85 0.51L8.77 2.53L9.59 2.80L10.36 3.19L11.73 1.70L13.50 3.47L12.01 4.84L12.40 5.61L12.67 6.43L14.69 6.35L14.69 8.85L12.67 8.77L12.40 9.59L12.01 10.36L13.50 11.73L11.73 13.50L10.36 12.01L9.59 12.40L8.77 12.67L8.85 14.69L6.35 14.69L6.43 12.67L5.61 12.40L4.84 12.01L3.47 13.50L1.70 11.73L3.19 10.36L2.80 9.59L2.53 8.77L0.51 8.85L0.51 6.35L2.53 6.43L2.80 5.61L3.19 4.84L1.70 3.47L3.47 1.70L4.84 3.19Z" fill="#ececec" stroke="#8c8c8c" stroke-width="0.9" stroke-linejoin="round"/><circle cx="7.6" cy="7.6" r="3.60" fill="none" stroke="#d4d4d4" stroke-width="1.2"/><circle cx="7.6" cy="7.6" r="2.2" fill="#fff" stroke="#9a9a9a" stroke-width="0.8"/><path d="M6.4 9.6h4.4v-2.3l4.8 4.2-4.8 4.2v-2.3h-4.4z" fill="#86c874" stroke="#2f8a22" stroke-width="1.1" stroke-linejoin="round"/></svg>
<svg class="a" style="left:966px;top:106px" width="19" height="20" viewBox="0 0 19 20"><path d="M6.2 8.6L9.5 11.6L12.8 8.6" fill="none" stroke="#3a3a3a" stroke-width="1.5"/></svg>
<svg class="a" style="left:966px;top:135px" width="19" height="20" viewBox="0 0 19 20"><path d="M6.2 8.6L9.5 11.6L12.8 8.6" fill="none" stroke="#3a3a3a" stroke-width="1.5"/></svg>
<svg class="a" style="left:966px;top:164px" width="19" height="20" viewBox="0 0 19 20"><path d="M6.2 8.6L9.5 11.6L12.8 8.6" fill="none" stroke="#3a3a3a" stroke-width="1.5"/></svg>
<div class="t" style="left:480.49px;top:4.00px;font-size:14px;color:#4a4a4a;transform:scaleX(1.0147)">Slic3r</div>
<div class="t" style="left:305.46px;top:30.80px;font-size:13px;color:#ffffff;transform:scaleX(1.0364)">Plater</div>
<div class="t" style="left:363.23px;top:30.70px;font-size:13px;color:#141414;transform:scaleX(1.0711)">Print Settings</div>
<div class="t" style="left:468.45px;top:30.70px;font-size:13px;color:#141414;transform:scaleX(1.0495)">Filament Settings</div>
<div class="t" style="left:596.43px;top:30.70px;font-size:13px;color:#141414;transform:scaleX(1.0747)">Printer Settings</div>
<div class="t" style="left:15.60px;top:78.20px;font-size:11.5px;color:#141414;transform:scaleX(0.9759)">Add...</div>
<div class="t" style="left:54.88px;top:78.20px;font-size:11.5px;color:#141414;transform:scaleX(1.0156)">Delete</div>
<div class="t" style="left:98.96px;top:78.20px;font-size:11.5px;color:#141414;transform:scaleX(1.0426)">Delete All</div>
<div class="t" style="left:160.20px;top:78.20px;font-size:11.5px;color:#141414;transform:scaleX(1.0049)">Arrange</div>
<div class="t" style="left:221.59px;top:78.20px;font-size:11.5px;color:#141414;transform:scaleX(1.0120)">More</div>
<div class="t" style="left:258.30px;top:78.20px;font-size:11.5px;color:#141414;transform:scaleX(1.0032)">Fewer</div>
<div class="t" style="left:311.60px;top:78.20px;font-size:11.5px;color:#141414;transform:scaleX(1.0725)">45° ccw</div>
<div class="t" style="left:365.80px;top:78.20px;font-size:11.5px;color:#141414;transform:scaleX(1.0286)">45° cw</div>
<div class="t" style="left:412.20px;top:78.20px;font-size:11.5px;color:#141414;transform:scaleX(1.0027)">Scale...</div>
<div class="t" style="left:460.22px;top:78.20px;font-size:11.5px;color:#141414;transform:scaleX(1.0810)">Split</div>
<div class="t" style="left:494.58px;top:78.20px;font-size:11.5px;color:#141414;transform:scaleX(1.0154)">Cut...</div>
<div class="t" style="left:542.65px;top:78.20px;font-size:11.5px;color:#141414;transform:scaleX(1.0510)">Settings...</div>
<div class="t" style="left:629.84px;top:111.00px;font-size:11.5px;color:#141414;transform:scaleX(1.0647)">Print settings:</div>
<div class="t" style="left:655.15px;top:140.00px;font-size:11.5px;color:#141414;transform:scaleX(1.0467)">Filament:</div>
<div class="t" style="left:664.63px;top:169.00px;font-size:11.5px;color:#141414;transform:scaleX(1.0743)">Printer:</div>
<div class="t" style="left:741.50px;top:110.00px;font-size:13px;color:#111111;transform:scaleX(1.1040)">0.25</div>
<div class="t" style="left:740.54px;top:138.50px;font-size:13px;color:#111111;transform:scaleX(0.9583)">PLA</div>
<div class="t" style="left:740.67px;top:168.00px;font-size:13px;color:#111111;transform:scaleX(1.0323)">Rebel II 0.4</div>
<div class="t" style="left:763.67px;top:196.00px;font-size:13px;color:#141414;transform:scaleX(1.0284)">Export STL...</div>
<div class="t" style="left:877.95px;top:196.00px;font-size:13px;color:#141414;transform:scaleX(1.0495)">Export G-code...</div>
<div class="t" style="left:633.36px;top:229.70px;font-size:11px;color:#141414;transform:scaleX(1.0393)">Name</div>
<div class="t" style="left:778.43px;top:229.70px;font-size:11px;color:#141414;transform:scaleX(1.0667)">Copies</div>
<div class="t" style="left:830.43px;top:229.70px;font-size:11px;color:#141414;transform:scaleX(1.0654)">Scale</div>
<div class="t" style="left:629.89px;top:245.60px;font-size:11px;color:#111111;transform:scaleX(0.9123)">Drzak_LM10UU_B.STL</div>
<div class="t" style="left:789.62px;top:245.60px;font-size:11px;color:#111111;transform:scaleX(0.9800)">1</div>
<div class="t" style="left:830.30px;top:245.60px;font-size:11px;color:#111111;transform:scaleX(0.8920)">0.4%</div>
<div class="t" style="left:640.19px;top:668.50px;font-size:11px;color:#141414;transform:scaleX(1.1118)">Info</div>
<div class="t" style="left:640.23px;top:690.30px;font-size:11px;color:#141414;transform:scaleX(1.0696)">Size:</div>
<div class="t" style="left:699.60px;top:690.30px;font-size:11px;color:#141414;transform:scaleX(1.1436)">200.00 x 98.00 x 116.00</div>
<div class="t" style="left:640.22px;top:709.30px;font-size:11px;color:#141414;transform:scaleX(1.0824)">Facets:</div>
<div class="t" style="left:698.48px;top:709.30px;font-size:11px;color:#141414;transform:scaleX(1.1197)">7632 (1 shells)</div>
<div class="t" style="left:640.20px;top:728.50px;font-size:11px;color:#141414;transform:scaleX(1.1000)">Manifold:</div>
<div class="t" style="left:699.60px;top:728.50px;font-size:11px;color:#141414;transform:scaleX(0.9667)">Yes</div>
<div class="t" style="left:844.20px;top:689.90px;font-size:11px;color:#141414;transform:scaleX(1.0513)">Volume:</div>
<div class="t" style="left:905.04px;top:689.90px;font-size:11px;color:#141414;transform:scaleX(1.1579)">1048375.95</div>
<div class="t" style="left:843.10px;top:709.30px;font-size:11px;color:#141414;transform:scaleX(1.1022)">Materials:</div>
<div class="t" style="left:905.20px;top:709.30px;font-size:11px;color:#141414;transform:scaleX(1.0000)">1</div>
<div class="t" style="left:221.11px;top:727.90px;font-size:13px;color:#ffffff;transform:scaleX(1.0867)">3D</div>
<div class="t" style="left:260.80px;top:727.90px;font-size:13px;color:#141414;transform:scaleX(1.1000)">2D</div>
<div class="t" style="left:300.57px;top:727.90px;font-size:13px;color:#141414;transform:scaleX(1.0289)">Preview</div>
<div class="t" style="left:370.37px;top:727.90px;font-size:13px;color:#141414;transform:scaleX(1.0289)">Layers</div>
<div class="t" style="left:1.67px;top:767.50px;font-size:11px;color:#111111;transform:scaleX(1.0314)">Loaded Drzak_LM10UU_B.STL</div>
</body></html>
